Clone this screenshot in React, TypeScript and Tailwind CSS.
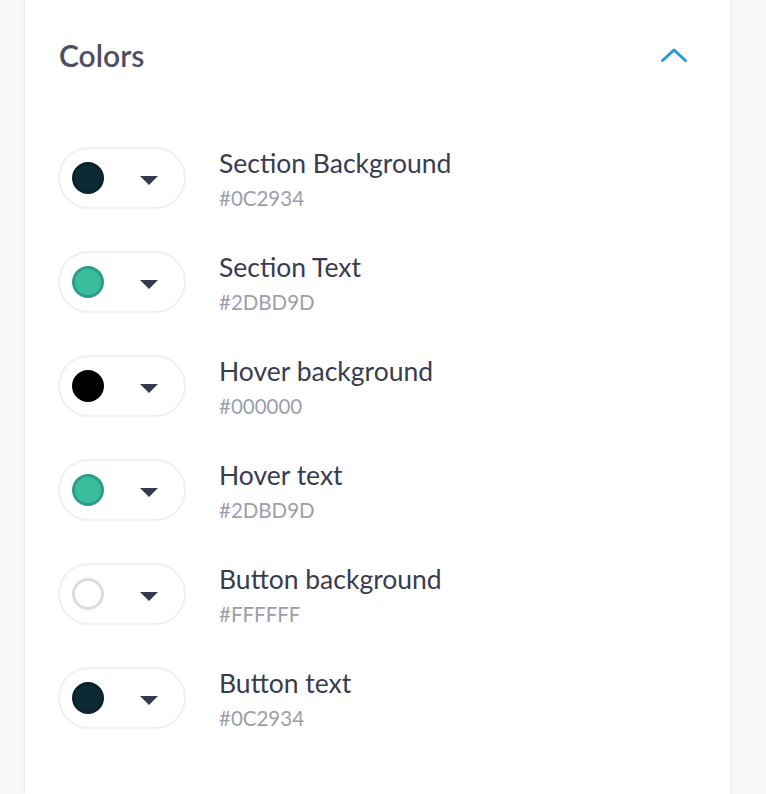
import React from "react";

const COLORS = [
  { name: "Section Background", hex: "#0C2934", fill: "bg-[#0c2934]", ring: "border-[#0a222b]" },
  { name: "Section Text", hex: "#2DBD9D", fill: "bg-[#3bbd9d]", ring: "border-[#2a9f83]" },
  { name: "Hover background", hex: "#000000", fill: "bg-black", ring: "border-black" },
  { name: "Hover text", hex: "#2DBD9D", fill: "bg-[#3bbd9d]", ring: "border-[#2a9f83]" },
  { name: "Button background", hex: "#FFFFFF", fill: "bg-white", ring: "border-[#dcdcdc]" },
  { name: "Button text", hex: "#0C2934", fill: "bg-[#0c2934]", ring: "border-[#0a222b]" },
];

function Caret() {
  return (
    <svg width="18" height="9" viewBox="0 0 18 9" className="shrink-0">
      <path d="M0 0 H18 L9 9 Z" fill="#363a4f" />
    </svg>
  );
}

function ChevronUp() {
  return (
    <svg width="28" height="16" viewBox="0 0 28 16" fill="none">
      <path d="M2.5 13.5 L14 3 L25.5 13.5" stroke="#1f9be0" strokeWidth="3" strokeLinecap="round" strokeLinejoin="round" />
    </svg>
  );
}

export default function App() {
  return (
    <div className="h-[794px] w-[766px] overflow-hidden bg-[#f8f8f8] pl-[25px] font-['Lato',sans-serif]">
      <div className="h-full w-[705px] bg-white shadow-[0_0_3px_rgba(0,0,0,0.12)]">
        <div className="flex items-center justify-between pl-[34px] pr-[42px] pt-[36px]">
          <h2 className="text-[30px] font-semibold leading-[38px] text-[#4e4f62]">Colors</h2>
          <ChevronUp />
        </div>

        <div className="mt-[73px] flex flex-col gap-[42px] pl-[33px]">
          {COLORS.map((c) => (
            <div key={c.name} className="flex h-[62px] items-center gap-[33px]">
              <button className="flex h-[62px] w-[128px] shrink-0 items-center rounded-full border-2 border-[#f0f0f0] bg-white pl-[12px] pr-[26px]">
                <span className={`h-[32px] w-[32px] rounded-full border-[3px] ${c.fill} ${c.ring}`} />
                <span className="ml-auto mt-[4px]">
                  <Caret />
                </span>
              </button>
              <div className="mt-[6px] flex flex-col">
                <span className="text-[26.5px] leading-[34px] text-[#393c51]">{c.name}</span>
                <span className="text-[20.5px] leading-[36px] text-[#9d9eab]">{c.hex}</span>
              </div>
            </div>
          ))}
        </div>
      </div>
    </div>
  );
}
